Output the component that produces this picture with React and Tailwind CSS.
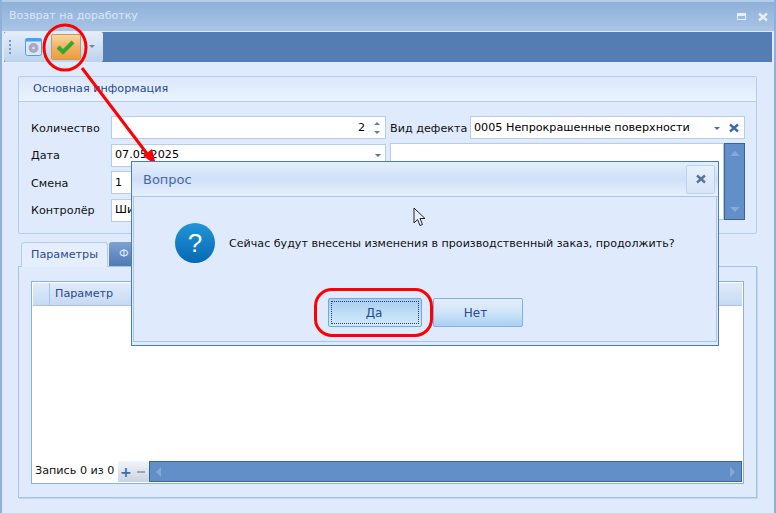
import React from 'react';

const font = "font-['DejaVu_Sans',sans-serif]";

const Caret = ({ className = 'border-t-[#4a6fa5]' }) => (
    <span className={`inline-block w-0 h-0 border-x-[3px] border-x-transparent border-t-[3px] ${className}`} />
);

const XMark = ({ className = '', size = 10 }) => (
    <svg width={size} height={size} viewBox="0 0 10 10" className={className}>
        <path d="M1 1.5 L9 8.5 M9 1.5 L1 8.5" stroke="currentColor" strokeWidth="2.4" />
    </svg>
);

const Field = ({ children, className = '' }) => (
    <div className={`bg-white border border-[#b4cdec] flex items-center pl-[3px] pt-[1px] text-[11.2px] text-black ${className}`}>{children}</div>
);

const Label = ({ children }) => <div className="text-[11.2px] text-[#111] leading-none pt-[2px]">{children}</div>;

// левая часть формы
const FormRow = ({ label, children }) => (
    <div className="flex items-center h-[23px]">
        <div className="w-[80px] shrink-0"><Label>{label}</Label></div>
        {children}
    </div>
);

const Question = () => (
    <div className="absolute left-[131px] top-[161px] w-[588px] h-[185px] bg-[#dfebfd] border border-[#4d7db0] flex flex-col">
        <div className="h-[35px] shrink-0 bg-gradient-to-b from-[#e3eefc] via-[#cfe0f7] to-[#e6f0fd] border-b border-[#a9c6ea] flex items-center justify-between pl-[11px] pr-[3px]">
            <span className="text-[13px] text-[#4a67a8] pt-[2px]">Вопрос</span>
            <div className="w-[29px] h-[29px] border border-[#bcd2ee] rounded-[2px] bg-gradient-to-b from-[#e7f0fc] to-[#d7e5f8] flex items-center justify-center text-[#5a7398]">
                <XMark />
            </div>
        </div>
        <div className="flex-1 mx-[1px] mb-[3px] border-x border-b border-[#a9c6ea] flex flex-col">
            <div className="flex items-center pl-[41px] mt-[26px] h-[40px]">
                <div className="w-[40px] h-[40px] rounded-full bg-gradient-to-b from-[#2295d8] to-[#0668b4] flex items-center justify-center text-white text-[26px] leading-none font-['Liberation_Sans',sans-serif]">?</div>
                <span className="ml-[14px] pt-[2px] text-[11.1px] text-[#111] whitespace-nowrap">Сейчас будут внесены изменения в производственный заказ, продолжить?</span>
            </div>
            <div className="flex gap-[11px] pl-[194px] mt-[35px]">
                <div className="w-[94px] h-[29px] rounded-[2px] border border-[#6fa6e4] bg-gradient-to-b from-[#a9cdf0] to-[#d3ecfb] p-[2px]">
                    <div className="h-full border border-dotted border-[#23406d] flex items-center justify-center pr-[2px] text-[12px] text-[#2c4a8c]">Да</div>
                </div>
                <div className="w-[90px] h-[29px] rounded-[2px] border border-[#7fb0e8] bg-gradient-to-b from-[#e6eef8] via-[#cfe5f8] to-[#a9d0f2] flex items-center justify-center pr-[5px] text-[12px] text-[#2c4a8c]">Нет</div>
            </div>
        </div>
    </div>
);

const Annotations = () => (
    <svg width="776" height="513" className="absolute left-0 top-0 pointer-events-none">
        <ellipse cx="65" cy="47.5" rx="21" ry="22.5" fill="none" stroke="#f00" strokeWidth="3" />
        <path d="M82 68 L148 155" stroke="#f00" strokeWidth="3" />
        <path d="M156 165 L143 156 L152 149 Z" fill="#f00" />
    </svg>
);

const Ring = () => (
    <div className="absolute left-[314px] top-[288px] w-[119px] h-[49px] rounded-[18px] border-[3px] border-[#f00]" />
);

export default function App() {
    return (
        <div className={`relative w-[776px] h-[513px] overflow-hidden bg-[#dfebfd] ${font}`}>
            {/* заголовок окна */}
            <div className="h-[31px] bg-gradient-to-b from-[#8fb0d8] to-[#a9c5e6] border-t-[2px] border-[#b5cde9] flex items-center justify-between pl-[9px] pr-[8px]">
                <span className="text-[11px] text-[#dbe7f6]">Возврат на доработку</span>
                <div className="flex items-center gap-[12px] text-[#e6eefa]">
                    <div className="w-[9px] h-[7px] border border-t-[3px] border-[#e6eefa]" />
                    <XMark size={10} />
                </div>
            </div>
            <div className="absolute left-0 top-0 bottom-0 w-[2px] bg-[#8fb0dd]" />
            <div className="absolute right-0 top-0 bottom-0 w-[2px] bg-[#8fb0dd]" />

            {/* панель инструментов */}
            <div className="ml-[4px] mr-[4px] h-[30px] mt-[1px] bg-[#537db3] flex">
                <div className="w-[99px] h-full rounded-[2px] bg-gradient-to-b from-[#e4eefb] to-[#bcd2ec] flex items-center pl-[5px]">
                    <div className="flex flex-col gap-[2px]">
                        <div className="w-[2px] h-[2px] bg-[#7c96b8]" />
                        <div className="w-[2px] h-[2px] bg-[#7c96b8]" />
                        <div className="w-[2px] h-[2px] bg-[#7c96b8]" />
                        <div className="w-[2px] h-[2px] bg-[#7c96b8]" />
                    </div>
                    <svg width="17" height="18" viewBox="0 0 17 18" className="ml-[14px]">
                        <rect x="0.5" y="0.5" width="16" height="17" rx="2" fill="#dfe8f7" stroke="#4aa0ee" />
                        <rect x="0.5" y="0.5" width="16" height="3" fill="#4aa0ee" />
                        <circle cx="8.5" cy="10" r="5" fill="#a9a6c8" />
                        <circle cx="8.5" cy="10" r="1.5" fill="#d5d5e6" />
                    </svg>
                    <div className="ml-[9px] w-[30px] h-[26px] rounded-[2px] border border-[#c89a5a] bg-gradient-to-b from-[#f7d6a0] via-[#f2b266] to-[#f09c38] flex items-center justify-center">
                        <svg width="20" height="16" viewBox="0 0 20 16">
                            <path d="M2 8 L7 13 L17 3" fill="none" stroke="#35a82f" strokeWidth="4" />
                        </svg>
                    </div>
                    <span className="ml-[8px] -mt-[1px] flex"><Caret className="border-t-[#6a87ad]" /></span>
                </div>
            </div>

            {/* основная информация */}
            <div className="ml-[18px] mr-[19px] mt-[14px] h-[158px] border border-[#b4cdec] rounded-[2px]">
                <div className="h-[25px] bg-gradient-to-b from-[#dbe8fb] to-[#eaf3fe] border-b border-[#b4cdec] flex items-center pl-[14px] text-[11.2px] text-[#2b4a8b]">
                    Основная информация
                </div>
                <div className="flex pl-[12px] pt-[14px] gap-[4px]">
                    <div className="w-[355px] flex flex-col gap-[4.5px]">
                        <FormRow label="Количество">
                            <Field className="flex-1 h-[23px] justify-end pr-[5px]">
                                <span>2</span>
                                <span className="ml-[9px] flex flex-col gap-[6px]">
                                    <span className="w-0 h-0 border-x-[3px] border-x-transparent border-b-[3px] border-b-[#5b82b8]" />
                                    <span className="w-0 h-0 border-x-[3px] border-x-transparent border-t-[3px] border-t-[#5b82b8]" />
                                </span>
                            </Field>
                        </FormRow>
                        <FormRow label="Дата">
                            <Field className="flex-1 h-[23px] justify-between pr-[4px]">
                                <span>07.05.2025</span>
                                <Caret />
                            </Field>
                        </FormRow>
                        <FormRow label="Смена">
                            <Field className="flex-1 h-[23px]">1</Field>
                        </FormRow>
                        <FormRow label="Контролёр">
                            <Field className="flex-1 h-[23px]">Шишкин</Field>
                        </FormRow>
                    </div>
                    <div className="w-[355px] flex flex-col gap-[4px]">
                        <div className="flex items-center h-[23px]">
                            <div className="w-[80px] shrink-0"><Label>Вид дефекта</Label></div>
                            <Field className="flex-1 h-[23px] justify-between pr-[5px]">
                                <span>0005 Непрокрашенные поверхности</span>
                                <span className="flex items-center gap-[9px]">
                                    <Caret />
                                    <XMark className="text-[#3c6bb0]" />
                                </span>
                            </Field>
                        </div>
                        <div className="flex h-[77px]">
                            <div className="flex-1 bg-white border border-[#b4cdec]" />
                            <div className="w-[21px] bg-[#638fc9] border border-[#3c6297] flex flex-col items-center justify-between py-[7px]">
                                <span className="w-0 h-0 border-x-[5px] border-x-transparent border-b-[5px] border-b-[#86a9d7]" />
                                <span className="w-0 h-0 border-x-[5px] border-x-transparent border-t-[5px] border-t-[#86a9d7]" />
                            </div>
                        </div>
                    </div>
                </div>
            </div>

            {/* вкладки */}
            <div className="ml-[21px] mt-[7px] flex h-[25px] items-end">
                <div className="w-[87px] h-[25px] relative top-[1px] z-10 bg-[#e4eefd] border border-b-0 border-[#b4cdec] rounded-t-[3px] flex items-center justify-center pt-[1px] text-[11.2px] text-[#2b4a8b]">Параметры</div>
                <div className="ml-[1px] w-[70px] h-[24px] bg-gradient-to-b from-[#7ea1d2] to-[#4f7ab5] rounded-t-[3px] flex items-center pl-[10px] text-[11.2px] text-[#dbe7f6]">Ф</div>
            </div>
            <div className="ml-[18px] mr-[19px] h-[232px] border border-[#a9c3e6] shadow-[1px_1px_0_#c4d6ef] pt-[14px] px-[12px]">
                <div className="h-[203px] bg-white border border-[#8fafd6] flex flex-col p-[1px]">
                    <div className="h-[23px] shrink-0 flex bg-gradient-to-b from-[#e0ebfb] to-[#c6daf4] border-b border-[#a9c3e6]">
                        <div className="w-[17px] border-r border-[#a9c3e6]" />
                        <div className="pl-[5px] flex items-center text-[11.2px] text-[#2b4a8b]">Параметр</div>
                    </div>
                    <div className="flex-1" />
                    <div className="h-[21px] shrink-0 flex items-center">
                        <span className="pl-[2px] w-[85px] text-[11.2px] text-[#111] whitespace-nowrap">Запись 0 из 0</span>
                        <div className="w-[31px] h-full bg-gradient-to-b from-[#f2f5fa] to-[#c9d3e2] flex items-center pl-[2px] gap-[5px]">
                            <span className="text-[#3c6bb0] text-[14px] font-bold leading-none">+</span>
                            <span className="w-[8px] h-[2px] bg-[#a0a5ae]" />
                        </div>
                        <div className="flex-1 h-full bg-[#638fc9] border border-[#3c6297] flex items-center justify-between px-[6px]">
                            <span className="w-0 h-0 border-y-[5px] border-y-transparent border-r-[5px] border-r-[#86a9d7]" />
                            <span className="w-0 h-0 border-y-[5px] border-y-transparent border-l-[5px] border-l-[#86a9d7]" />
                        </div>
                    </div>
                </div>
            </div>

            <Annotations />
            <Question />
            <Ring />

            {/* курсор */}
            <svg width="14" height="20" viewBox="0 0 14 20" className="absolute left-[413px] top-[207px]">
                <path d="M1 1 L1 16 L4.5 12.5 L7 18.5 L9.5 17.5 L7 11.5 L12 11.5 Z" fill="#e8eef7" stroke="#222" strokeWidth="1" />
            </svg>
        </div>
    );
}
